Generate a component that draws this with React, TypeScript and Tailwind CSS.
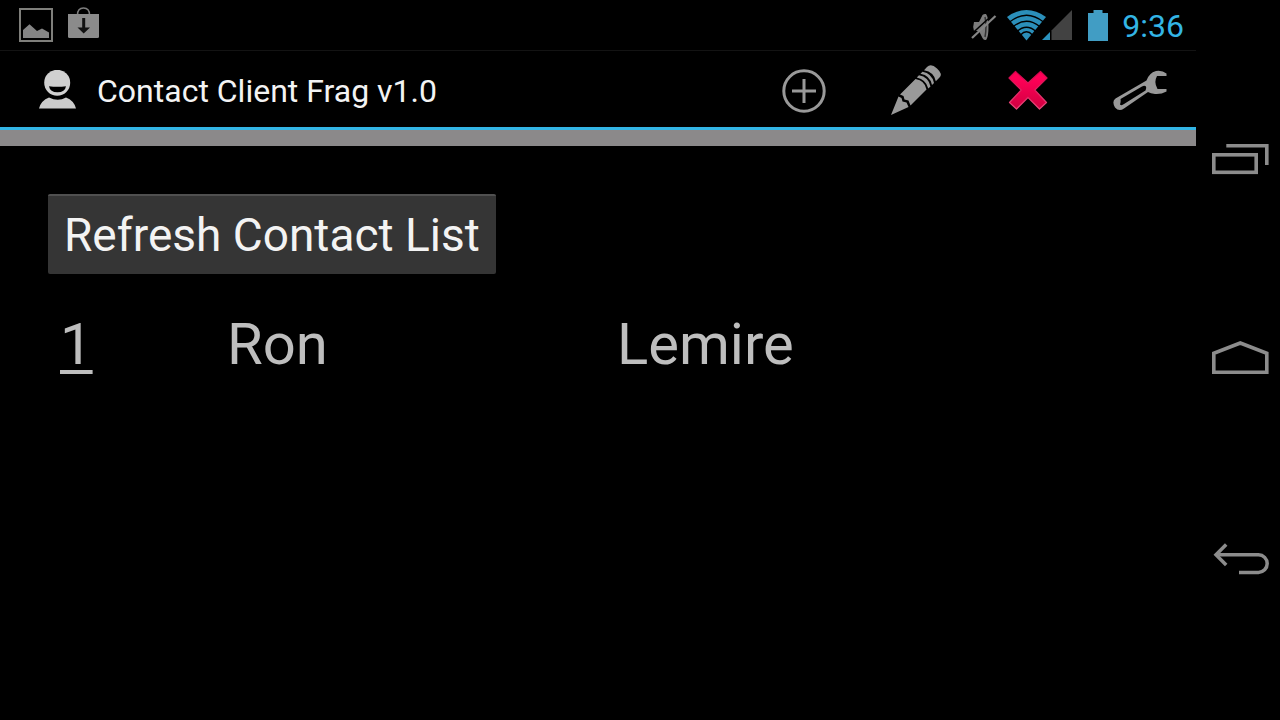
import type { ReactNode } from 'react';

type Contact = { id: number; first: string; last: string };

const contacts: Contact[] = [{ id: 1, first: 'Ron', last: 'Lemire' }];

function PictureIcon() {
  return (
    <svg width="34" height="34" viewBox="0 0 34 34" aria-hidden="true">
      <rect x="1" y="1" width="32" height="32" fill="none" stroke="#7f7f7b" strokeWidth="2" />
      <path d="M4 30V22L10.5 16.3L18 23L23 20.5L30 24.5V30Z" fill="#858585" />
    </svg>
  );
}

function BagIcon() {
  return (
    <svg width="32" height="32" viewBox="0 0 32 32" aria-hidden="true">
      <path d="M9.5 8C9.5 3.5 12 1 15.5 1S21.5 3.5 21.5 8" fill="none" stroke="#7d7d7d" strokeWidth="1.5" />
      <path d="M0 7H31V29.5Q31 31 29.5 31H1.5Q0 31 0 29.5Z" fill="#8b8b8b" />
      <path d="M14.2 11H17.2V20.5H22L15.7 26.5L9.500 20.5H14.2Z" fill="#111" />
    </svg>
  );
}

function MuteIcon() {
  return (
    <svg width="26" height="28" viewBox="0 0 26 28" aria-hidden="true">
      <path d="M3 9H8L11.5 2Q13 0.5 15 1Q17.500 4 17.500 13.500T15.500 26.500Q13 28 11.5 25L8 18H3Q1.5 13.500 3 9Z" fill="#7c7c7c" />
      <path d="M14 4Q16 13 14 24" fill="none" stroke="#333" strokeWidth="1.5" />
      <path d="M-1 22.500L22.500 1" stroke="#000" strokeWidth="1.500" />
      <path d="M1 25L24.500 3" stroke="#858585" strokeWidth="2.200" />
    </svg>
  );
}

function NetworkIcon() {
  return (
    <svg width="65" height="31" viewBox="0 0 65 31" aria-hidden="true">
      <path d="M0 7Q19.5 -7 39 7L19.5 30.500Z" fill="#2b8fba" />
      <g fill="none" stroke="#000" strokeWidth="1.4">
        <path d="M2.500 12Q19.500 -1.500 36.500 12" />
        <path d="M6 16.800Q19.500 5.800 33 16.800" />
        <path d="M10 21.500Q19.500 13 29 21.500" />
        <path d="M13.500 25Q19.500 18.500 25.500 25" />
      </g>
      <path d="M44.500 20.500V30H65V0Z" fill="#424242" />
      <path d="M35 30L43 22V30Z" fill="#2b93be" />
    </svg>
  );
}

function BatteryIcon() {
  return (
    <svg width="20" height="31" viewBox="0 0 20 31" aria-hidden="true">
      <path d="M5.500 0H14.500V3H20V31H0V3H5.500Z" fill="#419dc4" />
    </svg>
  );
}

function ContactIcon() {
  return (
    <svg width="40" height="42" viewBox="0 0 40 42" aria-hidden="true">
      <path d="M1 38.500Q3 30.500 11 27.500Q20 32 28 27.500Q36 30.500 38 38.500Z" fill="#cbcbcb" />
      <circle cx="19.200" cy="12.800" r="14.800" fill="#000" />
      <circle cx="19.200" cy="12.800" r="13" fill="#d0d0d0" />
      <path d="M11 16.300Q19.500 17.300 28 16.300Q27 22.300 19.500 22.300T11 16.300Z" fill="#000" />
    </svg>
  );
}

function AddIcon() {
  return (
    <svg width="56" height="56" viewBox="0 0 56 56" aria-hidden="true" fill="none" stroke="#999" strokeWidth="3">
      <circle cx="28" cy="28" r="20.2" />
      <path d="M28 16V40M16 28H40" />
    </svg>
  );
}

function PencilIcon() {
  return (
    <svg width="56" height="56" viewBox="0 0 56 56" aria-hidden="true" fill="#999">
      <path d="M3 52L10.5 33.500L13.500 35L14.500 38.500L18.500 39.500L20.500 44Z" />
      <path d="M12 31.500L27.500 16Q37 17.500 38.500 26.500L22.500 42.500L20.500 37.500L16.500 36.500L15.500 33Z" />
      <path d="M28.800 14.500L31 12.300Q40.500 14 42.500 23.500L40.300 25.500Q38 16.500 28.800 14.500Z" />
      <path d="M32.500 10.800L34.500 8.800Q44 10.500 46 20L44 22Q42 12.500 32.500 10.800Z" />
      <path d="M36 7.300L39 4Q43 0 49 5.500Q55 11 51.500 14.500L47.800 18.300Q46 9 36 7.300Z" />
    </svg>
  );
}

function DeleteIcon() {
  return (
    <svg width="56" height="56" viewBox="0 0 56 56" aria-hidden="true">
      <defs>
        <linearGradient id="delete-fill" x1="0" y1="0" x2="0" y2="1">
          <stop offset="0.2" stopColor="#ff0057" />
          <stop offset="1" stopColor="#d00040" />
        </linearGradient>
        <linearGradient id="delete-edge" x1="0" y1="0" x2="0" y2="1">
          <stop offset="0" stopColor="#d50049" />
          <stop offset="1" stopColor="#ea4a7c" />
        </linearGradient>
      </defs>
      <path
        d="M15.500 8.500L28 20L40.500 8.500L47 15L34.800 27L46.500 39.500L39.500 46L28 34.500L16.500 46L9.500 39.500L21.200 27L9 15Z"
        fill="url(#delete-fill)"
        stroke="url(#delete-edge)"
        strokeWidth="1.2"
        strokeLinejoin="round"
      />
    </svg>
  );
}

function WrenchIcon() {
  return (
    <svg width="56" height="56" viewBox="0 0 56 56" aria-hidden="true">
      <path
        fillRule="evenodd"
        fill="#999"
        d="M54.500 10.500V13H45Q41.500 19.500 45.500 26H54.500V28.500Q49 31.500 43 31Q38.500 30.500 36 29L12 45.500Q7 49 3 44.500Q-0.500 38.500 3.500 35.500L34.500 17.500Q37 10 44 8Q50 7 54.500 10.500ZM34 23.500Q32.500 22 30 23.500L8.500 36Q9 38.500 8 41.500Q9.500 43 12 41L33.500 27.500Q34.500 25.500 34 23.500Z"
      />
    </svg>
  );
}

function RecentsIcon() {
  return (
    <svg width="84" height="84" viewBox="0 0 84 84" aria-hidden="true" fill="none" stroke="#8c8c8c" strokeWidth="3.6">
      <rect x="17.8" y="36.8" width="42.4" height="17.5" />
      <path d="M30.300 27.800H70.800V47" />
    </svg>
  );
}

function HomeIcon() {
  return (
    <svg width="84" height="84" viewBox="0 0 84 84" aria-hidden="true" fill="none" stroke="#8c8c8c" strokeWidth="3.6">
      <path d="M17.800 54.300V35.200L44.300 25L70.800 35.200V54.300Z" />
    </svg>
  );
}

function BackIcon() {
  return (
    <svg width="84" height="84" viewBox="0 0 84 84" aria-hidden="true" fill="none" stroke="#8c8c8c" strokeWidth="3.5">
      <path d="M20 36.800H62.500A8.700 8.800 0 0 1 62.500 54.400H43" />
      <path d="M30.200 26.500L20 36.800L30.200 47" />
    </svg>
  );
}

function ActionButton({ label, children }: { label: string; children: ReactNode }) {
  return (
    <button type="button" aria-label={label} className="flex w-28 items-center justify-center">
      {children}
    </button>
  );
}

function NavButton({ label, children }: { label: string; children: ReactNode }) {
  return (
    <button type="button" aria-label={label} className="flex h-[200px] items-center justify-center">
      {children}
    </button>
  );
}

export default function App() {
  return (
    <div className="flex min-h-screen bg-black font-['Roboto',sans-serif] text-[#f3f3f3]">
      <div className="flex min-w-0 flex-1 flex-col">
        <div className="flex h-[51px] items-center justify-between border-b border-[#131313] pr-3 pl-[19px]">
          <div className="flex items-center gap-[15px]">
            <PictureIcon />
            <div className="pb-1">
              <BagIcon />
            </div>
          </div>
          <div className="flex items-center">
            <div className="pt-1">
              <MuteIcon />
            </div>
            <div className="pl-[10px]">
              <NetworkIcon />
            </div>
            <div className="pr-[14px] pl-4">
              <BatteryIcon />
            </div>
            <time className="pt-[2px] text-[32px] leading-8 text-[#33b5e5]">9:36</time>
          </div>
        </div>

        <header className="flex h-[79px] justify-between border-b-[3px] border-[#33b5e5] pt-[3px] pl-[38px]">
          <div className="flex items-center gap-[19px]">
            <ContactIcon />
            <h1 className="text-[32px] leading-10 whitespace-nowrap">Contact Client Frag v1.0</h1>
          </div>
          <div className="flex">
            <ActionButton label="Add contact">
              <AddIcon />
            </ActionButton>
            <ActionButton label="Edit contact">
              <PencilIcon />
            </ActionButton>
            <ActionButton label="Delete contact">
              <DeleteIcon />
            </ActionButton>
            <ActionButton label="Settings">
              <WrenchIcon />
            </ActionButton>
          </div>
        </header>
        <div className="h-4 bg-[#8b898a]" />

        <main className="flex flex-col items-start p-12">
          <button
            type="button"
            className="h-20 rounded-[2px] border-t-2 border-[#505050] bg-[#353535] px-4 text-[46px] leading-none whitespace-nowrap"
          >
            Refresh Contact List
          </button>
          <table className="mt-8 table-fixed text-left text-[58px] leading-[76px] text-[#bebebe]">
            <colgroup>
              <col className="w-[167px]" />
              <col className="w-[390px]" />
              <col className="w-[390px]" />
            </colgroup>
            <tbody>
              {contacts.map((c) => (
                <tr key={c.id}>
                  <td className="px-3 py-0">
                    <a href={'#contact-' + c.id} className="underline decoration-[4px] underline-offset-[6px]">
                      {c.id}
                    </a>
                  </td>
                  <td className="px-3 py-0">{c.first}</td>
                  <td className="px-3 py-0">{c.last}</td>
                </tr>
              ))}
            </tbody>
          </table>
        </main>
      </div>

      <nav aria-label="System" className="flex w-[84px] shrink-0 flex-col justify-center">
        <NavButton label="Recent apps">
          <RecentsIcon />
        </NavButton>
        <NavButton label="Home">
          <HomeIcon />
        </NavButton>
        <NavButton label="Back">
          <BackIcon />
        </NavButton>
      </nav>
    </div>
  );
}
